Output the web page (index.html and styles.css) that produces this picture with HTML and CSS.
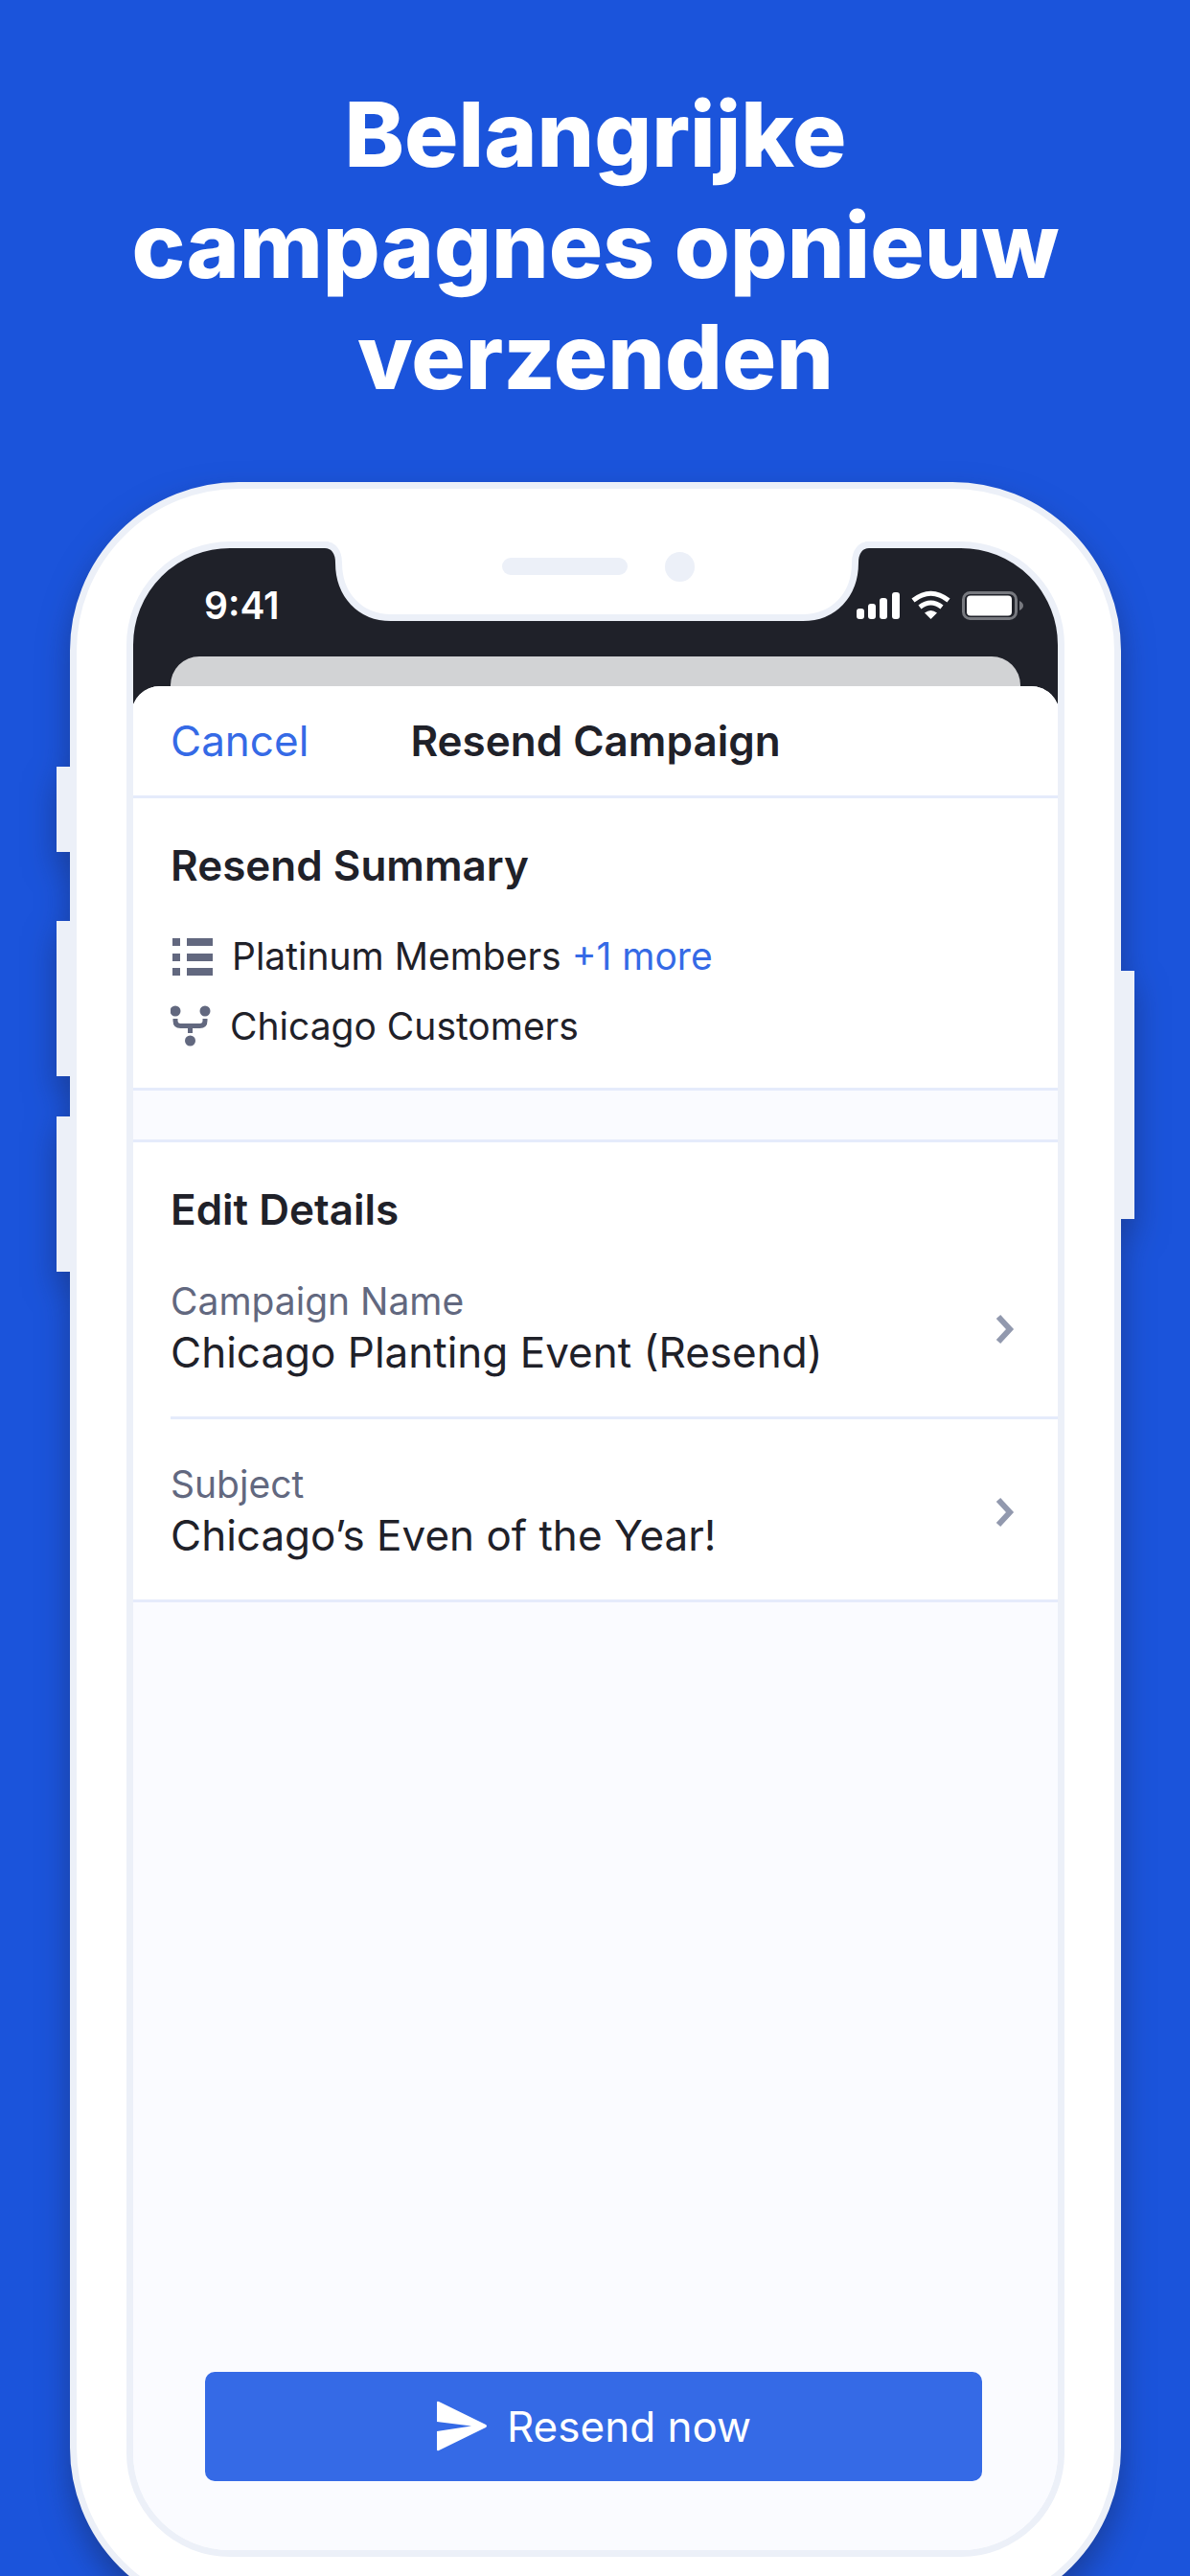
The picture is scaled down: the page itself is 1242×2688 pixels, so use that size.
FILE: index.html
```html
<!DOCTYPE html>
<html lang="nl">
<head>
    <meta charset="UTF-8">
    <meta name="viewport" content="width=device-width, initial-scale=1.0">
    <title>Belangrijke campagnes opnieuw verzenden</title>
    <link rel="stylesheet" href="styles.css">
</head>
<body>
    <main class="promo">
        <h1>Belangrijke<br>campagnes opnieuw<br>verzenden</h1>

        <div class="phone">
            <!-- Side buttons -->
            <span class="side-button mute"></span>
            <span class="side-button volume-up"></span>
            <span class="side-button volume-down"></span>
            <span class="side-button power"></span>

            <div class="screen">
                <div class="status-bar">
                    <span class="time">9:41</span>
                    <svg class="status-icons" viewBox="0 0 175 32" width="175" height="32">
                        <g fill="#fff">
                            <rect x="0" y="19" width="8" height="11" rx="3"/>
                            <rect x="12" y="14" width="8" height="16" rx="3"/>
                            <rect x="24" y="8" width="8" height="22" rx="3"/>
                            <rect x="37" y="2" width="8" height="28" rx="3"/>
                            <path d="M77.500 30L71 23.500Q77.500 18.500 84 23.500Z"/>
                        </g>
                        <g fill="none" stroke="#fff" stroke-width="5">
                            <path d="M59 10.500Q77.500 -4 96 10.500"/>
                            <path d="M66 17.500Q77.500 8.500 89 17.500"/>
                        </g>
                        <rect x="111.500" y="2.500" width="55" height="27" rx="7" fill="none" stroke="#77797f" stroke-width="3"/>
                        <rect x="115" y="5.500" width="47" height="21" rx="4" fill="#fff"/>
                        <path d="M170 11Q174 13 174 16T170 21Z" fill="#77797f"/>
                    </svg>
                </div>

                <div class="back-card"></div>

                <div class="sheet">
                    <header class="sheet-header">
                        <button class="cancel" type="button">Cancel</button>
                        <h2>Resend Campaign</h2>
                    </header>

                    <!-- Summary -->
                    <section class="summary">
                        <h3>Resend Summary</h3>
                        <ul>
                            <li>
                                <svg class="summary-icon" viewBox="0 0 46 44" width="46" height="44">
                                    <path d="M2 3h8v8H2zM17 3h27v8H17zM2 19h8v8H2zM17 19h27v8H17zM2 34h8v8H2zM17 34h27v8H17z" fill="#62687f"/>
                                </svg>
                                <span>Platinum Members <a href="#lists">+1 more</a></span>
                            </li>
                            <li>
                                <svg class="summary-icon" viewBox="0 0 44 44" width="44" height="44">
                                    <g fill="#62687f">
                                        <circle cx="5" cy="6" r="5.500"/>
                                        <circle cx="36" cy="6" r="5.500"/>
                                        <circle cx="20.500" cy="37" r="5.500"/>
                                    </g>
                                    <path d="M5 14V16Q5 21.500 10.500 21.500H30.500Q36 21.500 36 16V14M20.500 21.500V29" fill="none" stroke="#62687f" stroke-width="5"/>
                                </svg>
                                <span>Chicago Customers</span>
                            </li>
                        </ul>
                    </section>

                    <!-- Editable fields -->
                    <section class="details">
                        <h3>Edit Details</h3>
                        <button class="row" type="button">
                            <span class="field">
                                <span class="label">Campaign Name</span>
                                <span class="value">Chicago Planting Event (Resend)</span>
                            </span>
                            <svg class="chevron" viewBox="0 0 20 32" width="20" height="32">
                                <path d="M3 3L15 16L3 29" fill="none" stroke="#9299ae" stroke-width="6"/>
                            </svg>
                        </button>
                        <button class="row" type="button">
                            <span class="field">
                                <span class="label">Subject</span>
                                <span class="value">Chicago’s Even of the Year!</span>
                            </span>
                            <svg class="chevron" viewBox="0 0 20 32" width="20" height="32">
                                <path d="M3 3L15 16L3 29" fill="none" stroke="#9299ae" stroke-width="6"/>
                            </svg>
                        </button>
                    </section>

                    <button class="resend" type="button">
                        <svg viewBox="0 0 54 54" width="54" height="54">
                            <path d="M1 2Q1 0 3 1L52 25Q54 26.500 52 28L3 52Q1 53 1 51V32L37 26.500L1 22Z" fill="#fff"/>
                        </svg>
                        Resend now
                    </button>
                </div>
            </div>

            <!-- Notch -->
            <svg class="notch" viewBox="0 0 576 84" width="576" height="84">
                <path d="M8 0H568V7H8Z" fill="#fff"/>
                <path d="M4 3.500C13 3.500 18.500 11 18.500 22C18.500 56 41 79.500 73 79.500H503C535 79.500 557.500 56 557.500 22C557.500 11 563 3.500 572 3.500" fill="#fff" stroke="#ecf0f8" stroke-width="7"/>
            </svg>
            <span class="speaker"></span>
            <span class="camera"></span>
        </div>
    </main>
</body>
</html>
```
FILE: styles.css
```css
* {
    box-sizing: border-box;
}
body {
    margin: 0;
    font-family: 'Inter', sans-serif;
    color: #1f2129;
    background-color: #1b54db;
}
h1, h2, h3, ul {
    margin: 0;
    padding: 0;
}
button {
    border: none;
    padding: 0;
    font: inherit;
    color: inherit;
    background: none;
    cursor: pointer;
}
.promo {
    height: 100vh;
    padding: 82px 72px 0 73px;
    overflow: hidden;
}
h1 {
    margin-bottom: 73px;
    font-size: 94px;
    line-height: 116px;
    font-weight: 800;
    color: #fff;
    text-align: center;
}

/* Phone frame */
.phone {
    position: relative;
    padding: 55px 52px;
    border: 7px solid #ecf0f8;
    border-radius: 176px;
    background: #fff;
    filter: drop-shadow(0 16px 16px rgba(24, 40, 90, 0.5));
}
.side-button {
    position: absolute;
    left: -21px;
    width: 14px;
    height: 162px;
    background: #ecf0f8;
}
.mute {
    top: 290px;
    height: 89px;
}
.volume-up {
    top: 451px;
}
.volume-down {
    top: 655px;
}
.power {
    top: 503px;
    left: auto;
    right: -21px;
    height: 259px;
}
.screen {
    display: flex;
    flex-direction: column;
    aspect-ratio: 979 / 2103;
    border: 7px solid #ecf0f8;
    border-radius: 108px;
    background: linear-gradient(#1f2129 200px, #fafbff 200px);
    overflow: hidden;
}

/* Notch lies over the top of the screen */
.notch {
    position: absolute;
    top: 55px;
    left: calc(50% - 287px);
}
.speaker, .camera {
    position: absolute;
    top: 72px;
    left: calc(50% - 98px);
    width: 131px;
    height: 18px;
    border-radius: 9px;
    background: #ecf0f8;
}
.camera {
    top: 66px;
    left: calc(50% + 72px);
    width: 31px;
    height: 31px;
    border-radius: 50%;
}
.status-bar {
    display: flex;
    justify-content: space-between;
    align-items: center;
    height: 113px;
    padding: 6px 35px 0 74px;
    color: #fff;
}
.time {
    font-size: 39px;
    line-height: 48px;
    font-weight: 600;
}

/* Sheet */
.back-card {
    height: 31px;
    margin: 0 39px;
    border-radius: 30px 30px 0 0;
    background: #d2d3d5;
}
.sheet {
    flex: 1;
    display: flex;
    flex-direction: column;
    margin: 0 -2px;
    border-radius: 30px 30px 0 0;
    background: #fafbff;
    overflow: hidden;
}
.sheet-header {
    display: grid;
    grid-template-columns: 1fr auto 1fr;
    align-items: center;
    height: 117px;
    padding: 0 41px;
    border-bottom: 3px solid #e5ebfb;
    background: #fff;
    font-size: 44px;
    line-height: 56px;
}
.cancel {
    justify-self: start;
    color: #356ae6;
}
h2, h3 {
    font-size: 44px;
    line-height: 56px;
    font-weight: 600;
}
.summary {
    padding: 42px 41px 40px;
    border-bottom: 3px solid #e5ebfb;
    background: #fff;
}
.summary ul {
    display: flex;
    flex-direction: column;
    gap: 25px;
    margin-top: 43px;
    list-style: none;
}
.summary li {
    display: flex;
    align-items: center;
    gap: 18px;
    font-size: 39px;
    line-height: 48px;
}
.summary a {
    color: #356ae6;
    text-decoration: none;
}
.details {
    margin-top: 51px;
    padding-top: 42px;
    border-top: 3px solid #e5ebfb;
    border-bottom: 3px solid #e5ebfb;
    background: #fff;
}
.details h3 {
    padding-left: 41px;
}
.row {
    display: flex;
    justify-content: space-between;
    align-items: center;
    width: calc(100% - 41px);
    margin-left: 41px;
    padding: 44px 47px 38px 0;
    text-align: left;
}
.row + .row {
    border-top: 3px solid #e5ebfb;
}
.field {
    display: flex;
    flex-direction: column;
}
.label {
    font-size: 39px;
    line-height: 48px;
    color: #62687f;
}
.value {
    font-size: 44px;
    line-height: 58px;
}
.resend {
    display: flex;
    justify-content: center;
    align-items: center;
    gap: 20px;
    height: 114px;
    margin: auto 81px 72px 77px;
    border-radius: 10px;
    background: #356ae6;
    color: #fff;
    font-size: 44px;
}
```
